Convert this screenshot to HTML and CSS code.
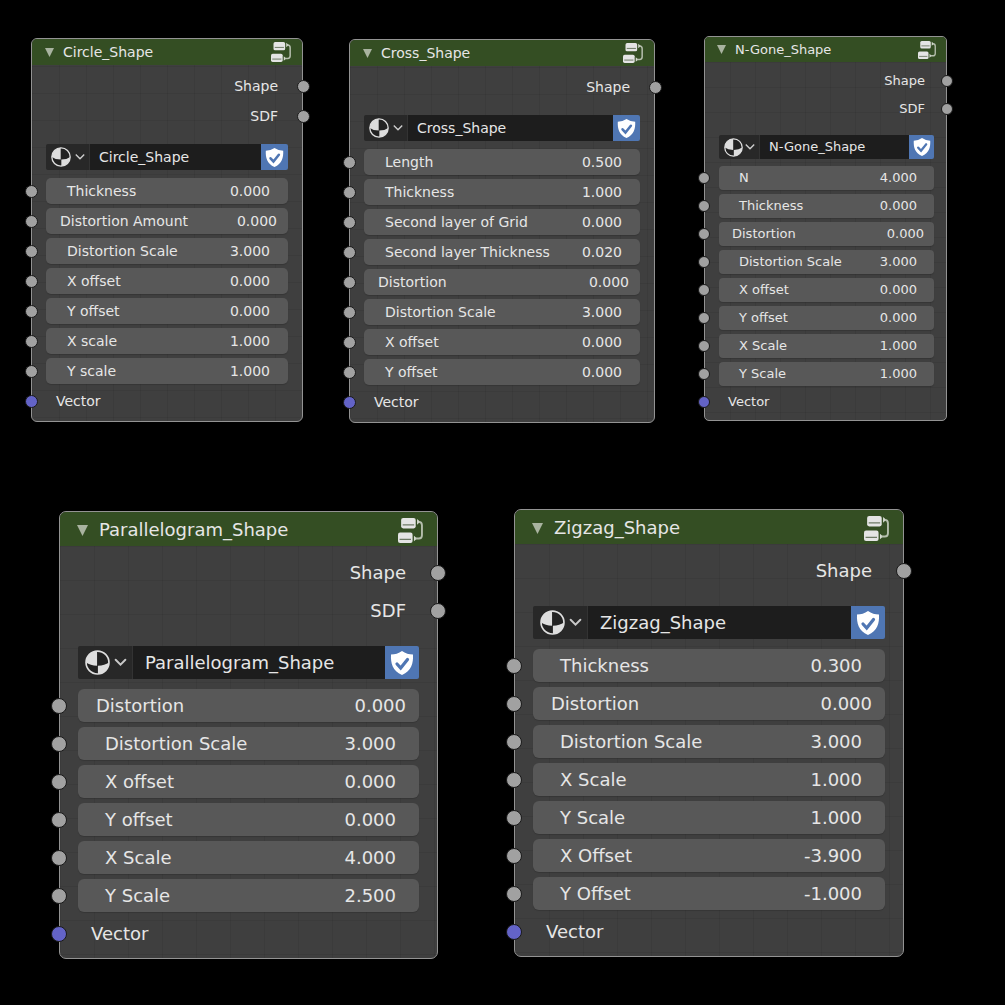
FILE: index.html
```html
<!DOCTYPE html>
<html lang="en">
<head>
    <meta charset="UTF-8">
    <meta name="viewport" content="width=device-width, initial-scale=1.0">
    <title>Shape Nodes</title>
    <link rel="stylesheet" href="styles.css">
</head>
<body>
    <svg class="icon-defs" aria-hidden="true">
        <symbol id="icon-triangle" viewBox="0 0 10 10">
            <path d="M0 0H10L5 10Z" fill="#a9b3a0"/>
        </symbol>
        <symbol id="icon-group" viewBox="0 0 24 24">
            <rect x="3" y="0" width="14" height="10" rx="2" fill="#e4e4e4"/>
            <rect x="0" y="14" width="14" height="10" rx="2" fill="#e4e4e4"/>
            <path d="M4.5 6.5H15.5M1.5 20.5H12.5" stroke="#6d7a65" stroke-width="1.2"/>
            <path d="M18.3 1V6.4L21.3 3.7ZM15.3 17V22.4L18.3 19.7Z" fill="#d5dbd0"/>
            <path d="M20 3.7Q23 3.7 23 7V16.5Q23 19.7 20 19.7H17" fill="none" stroke="#b5bead" stroke-width="1.8"/>
        </symbol>
        <symbol id="icon-material" viewBox="0 0 24 24">
            <circle cx="12" cy="12" r="11" fill="#222"/>
            <path d="M11.6 1V15Q5 15 1 12A11 11 0 0 1 11.6 1Z" fill="#dedede"/>
            <path d="M12.4 23V15Q19 15 23 12A11 11 0 0 1 12.4 23Z" fill="#dedede"/>
            <circle cx="12" cy="12" r="11" fill="none" stroke="#dedede" stroke-width="1.6"/>
        </symbol>
        <symbol id="icon-chevron" viewBox="0 0 12 8">
            <path d="M1.5 1.5L6 6L10.5 1.5" fill="none" stroke="#c8c8c8" stroke-width="1.8" stroke-linecap="round"/>
        </symbol>
        <symbol id="icon-shield" viewBox="0 0 24 24">
            <path d="M12 0Q7 3.5 1 3.5C0.6 12 2.5 20 12 24C21.5 20 23.4 12 23 3.5Q17 3.5 12 0Z" fill="#fff"/>
            <path d="M7 13L10.7 17L17.5 8.5" fill="none" stroke="#4f76b3" stroke-width="3.2" stroke-linecap="round"/>
        </symbol>
    </svg>

    <main class="canvas" id="canvas">
        <!-- Nodes will be dynamically added here -->
    </main>

    <script>
        // wide: true is a slider without step arrows, its text sits closer to the edges
        const nodes = [
            {
                id: 'circle', title: 'Circle_Shape', size: 'md',
                outputs: ['Shape', 'SDF'],
                inputs: [
                    { label: 'Thickness', value: '0.000' },
                    { label: 'Distortion Amount', value: '0.000', wide: true },
                    { label: 'Distortion Scale', value: '3.000' },
                    { label: 'X offset', value: '0.000' },
                    { label: 'Y offset', value: '0.000' },
                    { label: 'X scale', value: '1.000' },
                    { label: 'Y scale', value: '1.000' }
                ]
            },
            {
                id: 'cross', title: 'Cross_Shape', size: 'md',
                outputs: ['Shape'],
                inputs: [
                    { label: 'Length', value: '0.500' },
                    { label: 'Thickness', value: '1.000' },
                    { label: 'Second layer of Grid', value: '0.000' },
                    { label: 'Second layer Thickness', value: '0.020' },
                    { label: 'Distortion', value: '0.000', wide: true },
                    { label: 'Distortion Scale', value: '3.000' },
                    { label: 'X offset', value: '0.000' },
                    { label: 'Y offset', value: '0.000' }
                ]
            },
            {
                id: 'ngone', title: 'N-Gone_Shape', size: 'sm',
                outputs: ['Shape', 'SDF'],
                inputs: [
                    { label: 'N', value: '4.000' },
                    { label: 'Thickness', value: '0.000' },
                    { label: 'Distortion', value: '0.000', wide: true },
                    { label: 'Distortion Scale', value: '3.000' },
                    { label: 'X offset', value: '0.000' },
                    { label: 'Y offset', value: '0.000' },
                    { label: 'X Scale', value: '1.000' },
                    { label: 'Y Scale', value: '1.000' }
                ]
            },
            {
                id: 'parallelogram', title: 'Parallelogram_Shape', size: 'lg',
                outputs: ['Shape', 'SDF'],
                inputs: [
                    { label: 'Distortion', value: '0.000', wide: true },
                    { label: 'Distortion Scale', value: '3.000' },
                    { label: 'X offset', value: '0.000' },
                    { label: 'Y offset', value: '0.000' },
                    { label: 'X Scale', value: '4.000' },
                    { label: 'Y Scale', value: '2.500' }
                ]
            },
            {
                id: 'zigzag', title: 'Zigzag_Shape', size: 'lg',
                outputs: ['Shape'],
                inputs: [
                    { label: 'Thickness', value: '0.300' },
                    { label: 'Distortion', value: '0.000', wide: true },
                    { label: 'Distortion Scale', value: '3.000' },
                    { label: 'X Scale', value: '1.000' },
                    { label: 'Y Scale', value: '1.000' },
                    { label: 'X Offset', value: '-3.900' },
                    { label: 'Y Offset', value: '-1.000' }
                ]
            }
        ];

        const icon = (name) => `<svg class="icon icon-${name}" aria-hidden="true"><use href="#icon-${name}"/></svg>`;

        function renderNode(node) {
            const outputs = node.outputs.map(name => `
                <div class="row output">${name}<span class="socket socket-out"></span></div>
            `).join('');

            const inputs = node.inputs.map((input, i) => `
                <div class="row">
                    <span class="socket"></span>
                    <div class="field ${input.wide ? 'field-wide' : ''}">
                        <label for="${node.id}-${i}">${input.label}</label>
                        <input type="text" id="${node.id}-${i}" value="${input.value}">
                    </div>
                </div>
            `).join('');

            return `
                <section class="node node-${node.size} node-${node.id}">
                    <header class="node-header">
                        <button type="button" class="collapse" aria-label="Collapse">${icon('triangle')}</button>
                        <h2>${node.title}</h2>
                        <button type="button" class="edit-group" aria-label="Edit group">${icon('group')}</button>
                    </header>
                    <div class="outputs">${outputs}</div>
                    <div class="selector">
                        <button type="button" class="browse" aria-label="Browse node groups">${icon('material')}${icon('chevron')}</button>
                        <input type="text" class="group-name" aria-label="Group name" value="${node.title}">
                        <button type="button" class="fake-user" aria-label="Fake user" aria-pressed="true">${icon('shield')}</button>
                    </div>
                    ${inputs}
                    <div class="row vector"><span class="socket socket-vector"></span>Vector</div>
                </section>
            `;
        }

        document.getElementById('canvas').innerHTML = nodes.map(renderNode).join('');
    </script>
</body>
</html>
```
FILE: styles.css
```css
* {
    box-sizing: border-box;
}
body {
    margin: 0;
    background-color: #000;
    color: #e6e6e6;
    font-family: "DejaVu Sans", Verdana, sans-serif;
}
button,
input {
    margin: 0;
    padding: 0;
    border: 0;
    background: none;
    color: inherit;
    font: inherit;
}
button {
    cursor: pointer;
}
.icon-defs {
    position: absolute;
    width: 0;
    height: 0;
}
.icon {
    display: block;
    flex: none;
}
.canvas {
    position: relative;
    min-height: 100vh;
    overflow: auto;
}

/* Node sizes */
.node-sm {
    --text: 13px;
    --row: 28px;
    --row-bottom: 2px;
    --header: 25px;
    --side: 14px;
    --side-right: 12px;
    --pad: 20px;
    --pad-right: 17px;
    --pad-wide: 13px;
    --pad-wide-right: 10px;
    --output-right: 21px;
    --vector-left: 23px;
    --outputs-top: 5px;
    --outputs-bottom: 10px;
    --selector-gap: 3px;
    --bottom: 4px;
    --browse: 40px;
    --shield: 25px;
    --name-pad: 9px;
    --triangle: 9px;
    --title-gap: 9px;
    --header-left: 12px;
    --header-right: 10px;
    --group: 18px;
    --material: 19px;
    --chevron: 10px;
    --shield-icon: 18px;
    --socket: 12px;
    --radius: 4px;
    --grid: 25px;
}
.node-md {
    --text: 14px;
    --row: 30px;
    --row-bottom: 2px;
    --header: 26px;
    --side: 14px;
    --side-right: 14px;
    --pad: 21px;
    --pad-right: 18px;
    --pad-wide: 14px;
    --pad-wide-right: 11px;
    --output-right: 24px;
    --vector-left: 24px;
    --outputs-top: 6px;
    --outputs-bottom: 11px;
    --selector-gap: 4px;
    --bottom: 5px;
    --browse: 43px;
    --shield: 27px;
    --name-pad: 9px;
    --triangle: 9px;
    --title-gap: 9px;
    --header-left: 13px;
    --header-right: 11px;
    --group: 20px;
    --material: 20px;
    --chevron: 10px;
    --shield-icon: 19px;
    --socket: 13px;
    --radius: 5px;
    --grid: 27px;
}
.node-lg {
    --text: 18px;
    --row: 38px;
    --row-bottom: 3px;
    --header: 34px;
    --side: 18px;
    --side-right: 18px;
    --pad: 27px;
    --pad-right: 23px;
    --pad-wide: 18px;
    --pad-wide-right: 13px;
    --output-right: 31px;
    --vector-left: 31px;
    --outputs-top: 8px;
    --outputs-bottom: 14px;
    --selector-gap: 5px;
    --bottom: 5px;
    --browse: 54px;
    --shield: 34px;
    --name-pad: 12px;
    --triangle: 11px;
    --title-gap: 11px;
    --header-left: 17px;
    --header-right: 14px;
    --group: 25px;
    --material: 25px;
    --chevron: 13px;
    --shield-icon: 24px;
    --socket: 16px;
    --radius: 6px;
    --grid: 34px;
}

/* Places on the canvas */
.node-circle {
    left: 31px;
    top: 38px;
    width: 272px;
}
.node-cross {
    left: 349px;
    top: 39px;
    width: 306px;
}
.node-ngone {
    left: 704px;
    top: 36px;
    width: 243px;
}
.node-parallelogram {
    left: 59px;
    top: 511px;
    width: 379px;
}
.node-zigzag {
    left: 514px;
    top: 509px;
    width: 390px;
}

.node {
    position: absolute;
    padding-bottom: var(--bottom);
    border: 1px solid #939393;
    border-radius: calc(var(--radius) + 1px);
    background-color: #3f3f3f;
    background-image:
        linear-gradient(to right, rgba(0, 0, 0, 0.07) 1px, transparent 1px),
        linear-gradient(to bottom, rgba(0, 0, 0, 0.07) 1px, transparent 1px);
    background-size: var(--grid) var(--grid);
    font-size: var(--text);
    line-height: var(--row);
}
.node-header {
    display: flex;
    align-items: center;
    height: var(--header);
    padding: 0 var(--header-right) 0 var(--header-left);
    border-radius: var(--radius) var(--radius) 0 0;
    background-color: #344e23;
}
.node-header h2 {
    flex: 1;
    margin: 0 0 0 var(--title-gap);
    font-size: inherit;
    font-weight: normal;
    line-height: var(--header);
}
.node-lg .node-header {
    padding-top: 2px;
}
.icon-triangle {
    width: var(--triangle);
    height: var(--triangle);
}
.icon-group {
    width: var(--group);
    height: var(--group);
}
.icon-material {
    width: var(--material);
    height: var(--material);
}
.icon-chevron {
    width: var(--chevron);
    height: var(--chevron);
}
.icon-shield {
    width: var(--shield-icon);
    height: var(--shield-icon);
}
.outputs {
    padding: var(--outputs-top) 0 var(--outputs-bottom);
}
.row {
    position: relative;
    height: var(--row);
    padding: 2px var(--side-right) var(--row-bottom) var(--side);
    line-height: calc(var(--row) - 4px);
}
.output {
    padding-right: var(--output-right);
    text-align: right;
}
.vector {
    padding-left: var(--vector-left);
}

/* Sockets sit on the border of the node */
.socket {
    position: absolute;
    left: calc(var(--socket) / -2 - 1px);
    top: calc((var(--row) - var(--socket)) / 2);
    width: var(--socket);
    height: var(--socket);
    border: 1px solid #1a1a1a;
    border-radius: 50%;
    background-color: #a1a1a1;
}
.socket-out {
    left: auto;
    right: calc(var(--socket) / -2 - 1px);
}
.socket-vector {
    background-color: #6363c7;
}

.selector {
    display: flex;
    height: calc(var(--row) - 2px - var(--row-bottom));
    margin: 2px var(--side-right) calc(var(--row-bottom) + var(--selector-gap)) var(--side);
    border-radius: 2px;
    overflow: hidden;
}
.browse {
    display: flex;
    align-items: center;
    justify-content: space-between;
    width: var(--browse);
    padding: 0 4px 0 5px;
    background-color: #282828;
}
.node-lg .browse {
    padding: 0 5px 0 7px;
}
.group-name {
    flex: 1;
    min-width: 0;
    padding: 0 var(--name-pad);
    border-left: 1px solid #333;
    background-color: #1d1d1d;
}
.fake-user {
    display: flex;
    align-items: center;
    justify-content: center;
    width: var(--shield);
    background-color: #4f76b3;
}

.field {
    display: flex;
    align-items: center;
    height: 100%;
    padding: 0 var(--pad-right) 0 var(--pad);
    border-radius: var(--radius);
    background-color: #585858;
    box-shadow: 0 1px 1px rgba(0, 0, 0, 0.15);
}
.field-wide {
    padding: 0 var(--pad-wide-right) 0 var(--pad-wide);
}
.field label {
    flex: 1;
    white-space: nowrap;
}
.field input {
    width: 4em;
    text-align: right;
}
```
